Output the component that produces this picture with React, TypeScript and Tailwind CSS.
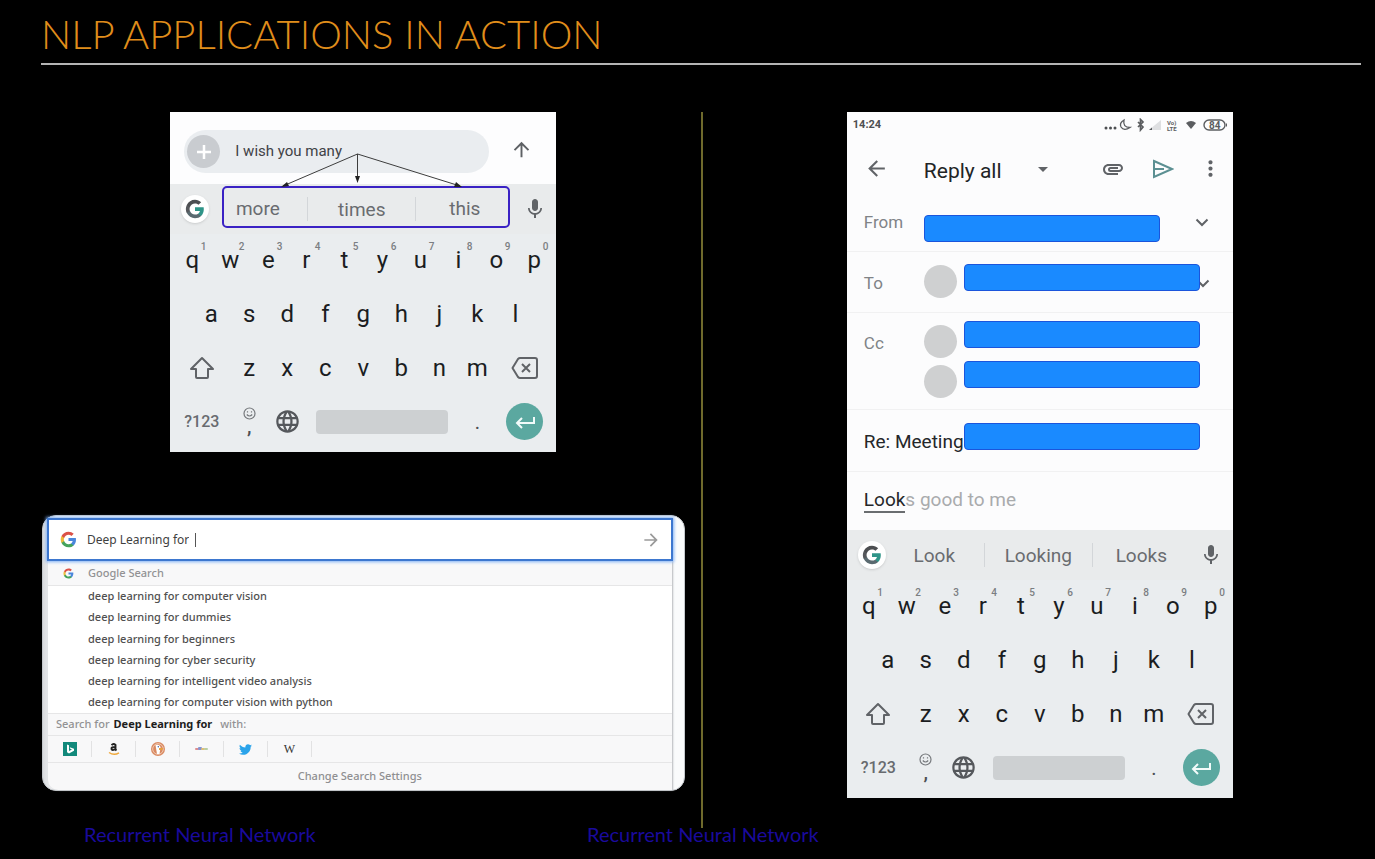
import React from "react";
import {
  MdArrowBack,
  MdArrowDropDown,
  MdArrowForward,
  MdArrowUpward,
  MdAttachment,
  MdLanguage,
  MdMic,
  MdMoreVert,
} from "react-icons/md";
import { FaTwitter } from "react-icons/fa";

type GoogleColors = { blue: string; green: string; yellow: string; red: string };

const brandColors: GoogleColors = { blue: "#4a86dc", green: "#45a35c", yellow: "#ecbb3c", red: "#db5147" };
const mutedColors: GoogleColors = { blue: "#2f9488", green: "#5a6a70", yellow: "#56585c", red: "#4c4e51" };

function GoogleG({ size, colors }: { size: number; colors: GoogleColors }) {
  return (
    <svg width={size} height={size} viewBox="0 0 24 24" aria-hidden="true">
      <path fill={colors.blue} d="M22.56 12.25c0-.78-.07-1.53-.2-2.25H12v4.26h5.92c-.26 1.37-1.04 2.53-2.21 3.31v2.77h3.57c2.08-1.92 3.28-4.74 3.28-8.09z" />
      <path fill={colors.green} d="M12 23c2.97 0 5.46-.98 7.28-2.66l-3.57-2.77c-.98.66-2.23 1.06-3.71 1.06-2.86 0-5.29-1.93-6.16-4.53H2.18v2.84C3.99 20.53 7.7 23 12 23z" />
      <path fill={colors.yellow} d="M5.84 14.09c-.22-.66-.35-1.36-.35-2.09s.13-1.43.35-2.09V7.07H2.18C1.43 8.55 1 10.22 1 12s.43 3.45 1.18 4.93l3.66-2.84z" />
      <path fill={colors.red} d="M12 5.38c1.62 0 3.06.56 4.21 1.64l3.15-3.15C17.45 2.09 14.97 1 12 1 7.7 1 3.99 3.47 2.18 7.07l3.66 2.84c.87-2.6 3.3-4.53 6.16-4.53z" />
    </svg>
  );
}

function ShiftIcon() {
  return (
    <svg width="26" height="24" viewBox="0 0 26 24" fill="none" stroke="#606367" strokeWidth="2" strokeLinejoin="round">
      <path d="M13 2 L24 13 H19 V21 Q19 22 18 22 H8 Q7 22 7 21 V13 H2 Z" />
    </svg>
  );
}

function BackspaceIcon() {
  return (
    <svg width="28" height="24" viewBox="0 0 28 24" fill="none" stroke="#606367" strokeWidth="2" strokeLinejoin="round">
      <path d="M9 2 H24 Q26 2 26 4 V20 Q26 22 24 22 H9 Q8 22 7 21 L1.500 12 L7 3 Q8 2 9 2 Z" />
      <path d="M11 8 L19 16 M19 8 L11 16" />
    </svg>
  );
}

function SmileIcon() {
  return (
    <svg width="13" height="13" viewBox="0 0 13 13" fill="none" stroke="#75787c" strokeWidth="1.200">
      <circle cx="6.500" cy="6.500" r="5.500" />
      <path d="M3.800 7.500 Q6.500 10.500 9.200 7.500" />
      <path d="M4.500 4.200 V5.400 M8.500 4.200 V5.400" />
    </svg>
  );
}

function EnterIcon() {
  return (
    <svg width="22" height="16" viewBox="0 0 22 16" fill="none" stroke="#f2fbfa" strokeWidth="2">
      <path d="M20 3 V9 H3 M8 4 L3 9 L8 14" />
    </svg>
  );
}

function LetterKey({ letter, digit }: { letter: string; digit?: string }) {
  return (
    <button type="button" className="relative col-span-2 h-full text-2xl text-[#1b1d1f]">
      {letter}
      {digit !== undefined && (
        <span className="absolute top-2 right-[5px] text-[10px] leading-[10px] font-medium text-[#7b7e82]">{digit}</span>
      )}
    </button>
  );
}

function Keyboard({ words }: { words: string[] }) {
  return (
    <div className="bg-[#eaedef] pb-1">
      <div className="grid h-[50px] grid-cols-[38px_99px_1fr_97px_43px] items-center bg-[#e9ebec]">
        <button type="button" aria-label="Google" className="ml-[11px] flex size-7 items-center justify-center rounded-full bg-white shadow-sm">
          <GoogleG size={20} colors={mutedColors} />
        </button>
        <button type="button" className="pt-px text-[19px] text-[#696c70]">{words[0]}</button>
        <button type="button" className="h-6 border-x border-[#d3d6d9] pt-px text-[19px] leading-6 text-[#696c70]">{words[1]}</button>
        <button type="button" className="pt-px text-[19px] text-[#696c70]">{words[2]}</button>
        <button type="button" aria-label="Voice input" className="flex justify-center text-[#606367]">
          <MdMic size={24} />
        </button>
      </div>
      <div className="grid h-[52px] grid-cols-20 px-[3px]">
        {"qwertyuiop".split("").map((c, i) => (
          <LetterKey key={c} letter={c} digit={String((i + 1) % 10)} />
        ))}
      </div>
      <div className="grid h-[55px] grid-cols-18 px-[22px]">
        {"asdfghjkl".split("").map((c) => (
          <LetterKey key={c} letter={c} />
        ))}
      </div>
      <div className="grid h-[54px] grid-cols-20 px-[3px]">
        <button type="button" aria-label="Shift" className="col-span-3 flex items-center justify-center">
          <ShiftIcon />
        </button>
        {"zxcvbnm".split("").map((c) => (
          <LetterKey key={c} letter={c} />
        ))}
        <button type="button" aria-label="Backspace" className="col-span-3 flex items-center justify-center">
          <BackspaceIcon />
        </button>
      </div>
      <div className="grid h-[53px] grid-cols-20 px-[3px]">
        <button type="button" className="col-span-3 text-base font-medium text-[#686b6f]">?123</button>
        <button type="button" className="col-span-2 flex flex-col items-center pt-3 text-xl leading-3 font-medium text-[#4c4f53]">
          <SmileIcon />
          ,
        </button>
        <button type="button" aria-label="Language" className="col-span-2 flex items-center justify-center text-[#55585c]">
          <MdLanguage size={27} />
        </button>
        <button type="button" aria-label="Space" className="col-span-8 mx-[10px] h-6 self-center rounded-sm bg-[#cdd0d2]" />
        <button type="button" className="col-span-2 text-xl text-[#4c4f53]">.</button>
        <button type="button" aria-label="Enter" className="col-span-3 flex size-[37px] items-center justify-center self-center justify-self-center rounded-full bg-[#5ba8a0]">
          <EnterIcon />
        </button>
      </div>
    </div>
  );
}

function MessagePhone() {
  return (
    <section className="relative mx-auto w-[386px] max-w-full bg-[#fdfdfe] font-[Roboto,sans-serif]">
      <div className="flex h-[72px] items-center justify-between pt-[7px] pr-[23px] pl-[14px]">
        <label className="flex h-[43px] w-[305px] items-center gap-[15px] rounded-full bg-[#eaedf0] pl-[3px]">
          <span className="flex size-[33px] items-center justify-center rounded-full bg-[#c9ccd0]">
            <svg width="14" height="14" viewBox="0 0 14 14" stroke="#fff" strokeWidth="2.500">
              <path d="M7 0 V14 M0 7 H14" />
            </svg>
          </span>
          <input aria-label="Message" defaultValue="I wish you many" className="w-60 bg-transparent text-[15px] text-[#3f4246] outline-none" />
        </label>
        <button type="button" aria-label="Send" className="pb-1 text-[#5e6165]">
          <MdArrowUpward size={23} />
        </button>
      </div>
      <Keyboard words={["more", "times", "this"]} />
      <svg className="pointer-events-none absolute inset-0" width="386" height="130" viewBox="0 0 386 130" fill="none">
        <rect x="53" y="75" width="286" height="40" rx="4" stroke="#3a22c4" strokeWidth="2" />
        <g stroke="#3d3d3d" strokeWidth="1">
          <path d="M187.500 42 L113 74 M187.500 42 V68 M187.500 42 L290 74" />
        </g>
        <g fill="#222">
          <path d="M111 75 L117 70 L119 74 Z" />
          <path d="M187.500 71 L185 64 H190 Z" />
          <path d="M292 75 L284 75 L286 70 Z" />
        </g>
      </svg>
    </section>
  );
}

const suggestions = [
  "deep learning for computer vision",
  "deep learning for dummies",
  "deep learning for beginners",
  "deep learning for cyber security",
  "deep learning for intelligent video analysis",
  "deep learning for computer vision with python",
];

const engines: { name: string; icon: React.ReactNode }[] = [
  {
    name: "Bing",
    icon: (
      <svg width="14" height="14" viewBox="0 0 14 14">
        <rect width="14" height="14" fill="#12897b" />
        <path d="M4 2.500 L6 3.200 V9 L9 7.600 L7.300 6.800 L6.700 5.200 L11 6.700 V8.700 L6 11.500 L4 10.300 Z" fill="#fff" />
      </svg>
    ),
  },
  {
    name: "Amazon",
    icon: (
      <svg width="14" height="14" viewBox="0 0 14 14" fill="none">
        <path d="M4.500 3.200 Q6.500 1 8.500 3 V7.500 L9.500 8.500 M8.500 5 Q4 4.800 4.500 7 Q5.500 9 8.500 7" stroke="#222" strokeWidth="1.900" />
        <path d="M2 10.500 Q7 14 12 10.800" stroke="#f0a93c" strokeWidth="1.400" />
      </svg>
    ),
  },
  {
    name: "DuckDuckGo",
    icon: (
      <svg width="14" height="14" viewBox="0 0 14 14">
        <circle cx="7" cy="7" r="7" fill="#d98a62" />
        <circle cx="7" cy="7" r="5.300" fill="none" stroke="#f6d9c8" strokeWidth="0.800" />
        <path d="M4.500 3 Q9 2 9.500 5.500 L8.500 12 H6 Z" fill="#fff" />
        <path d="M8 6 H12.500 L11 8 H8 Z" fill="#e8a03f" />
        <circle cx="7.300" cy="4.800" r="0.700" fill="#35589b" />
      </svg>
    ),
  },
  {
    name: "eBay",
    icon: (
      <svg width="13" height="6" viewBox="0 0 13 6">
        <rect x="0" y="2" width="4" height="2" rx="1" fill="#dd8e90" />
        <rect x="3" y="1" width="4" height="3" rx="1" fill="#8795cf" />
        <rect x="6" y="2" width="4" height="2" rx="1" fill="#e0bf79" />
        <rect x="9" y="2" width="4" height="2" rx="1" fill="#b9cfa4" />
      </svg>
    ),
  },
  { name: "Twitter", icon: <FaTwitter size={13} color="#2aa3ea" /> },
  { name: "Wikipedia", icon: <span className="font-['Liberation_Serif',serif] text-xs text-[#333]">W</span> },
];

function SearchCard() {
  return (
    <section className="rounded-[14px] border border-[#c4c8cc] bg-[#fafbfc] bg-linear-to-r from-[#d9dbde] to-[#fafbfc] to-2% pt-[2px] pr-[11px] pl-1 font-['Noto_Sans',sans-serif] text-[11px] font-medium text-[#505050]">
      <form className="relative flex h-[43px] items-center border-2 border-[#3d77cf] bg-white pr-[10px] pl-[11px] shadow-[0_0_3px_1px_#7fb0f5]" onSubmit={(e) => e.preventDefault()}>
        <GoogleG size={17} colors={brandColors} />
        <input aria-label="Search" defaultValue="Deep Learning for" className="field-sizing-content ml-[10px] bg-transparent text-xs font-normal text-[#3f3f3f] outline-none" />
        <span className="ml-[6px] h-[14px] w-px bg-[#555]" />
        <button type="submit" aria-label="Go" className="ml-auto text-[#9a9a9a]">
          <MdArrowForward size={20} />
        </button>
      </form>
      <div className="mx-px overflow-hidden rounded-bl-[10px] bg-[#f8f8f9] pt-px shadow-[1px_0_2px_#b5b8bb]">
        <div className="flex h-6 items-center gap-[14px] border-b border-[#e6e6e7] pl-[15px] text-[#929294]">
          <GoogleG size={11} colors={brandColors} />
          Google Search
        </div>
        <ul className="grid h-[127px] grid-rows-6 items-center bg-white pl-10">
          {suggestions.map((s) => (
            <li key={s}>{s}</li>
          ))}
        </ul>
        <p className="flex h-[23px] items-center border-y border-[#e6e6e7] pl-2 text-[#929294]">
          <span>Search for</span>
          <strong className="mr-2 ml-1 text-[#1d1d1d]">Deep Learning for</strong>
          <span>with:</span>
        </p>
        <div className="flex h-[27px] items-center border-b border-[#e6e6e7]">
          {engines.map((e) => (
            <button key={e.name} type="button" aria-label={e.name} className="flex h-4 w-11 items-center justify-center border-r border-[#e2e2e3]">
              {e.icon}
            </button>
          ))}
        </div>
        <button type="button" className="h-[27px] w-full text-center text-[#8f8f91]">Change Search Settings</button>
      </div>
    </section>
  );
}

function Redacted() {
  return <span className="h-[27px] w-[236px] shrink-0 rounded-sm border border-[#1b55dc] bg-[#1a8aff]" />;
}

function Avatar() {
  return <span className="mr-[7px] size-[33px] shrink-0 rounded-full bg-[#cfd0d1]" />;
}

function Chevron() {
  return (
    <svg width="14" height="20" viewBox="0 0 14 20" fill="none" stroke="#5f6266" strokeWidth="2">
      <path d="M1.500 7.500 L7 13 L12.500 7.500" />
    </svg>
  );
}

function StatusIcons() {
  return (
    <svg width="124" height="14" viewBox="0 0 124 14" fill="none">
      <g fill="#4d4f52">
        <circle cx="3" cy="10" r="1.500" />
        <circle cx="7.500" cy="10" r="1.500" />
        <circle cx="12" cy="10" r="1.500" />
      </g>
      <path d="M21 2 Q16 5 18 9 Q21 13.500 27 9.500 Q19.500 9.500 21 2 Z" stroke="#5b5d60" strokeWidth="1.300" />
      <path d="M35 4 L40 9 L37.500 12 V1.500 L40 4 L35 9" stroke="#5b5d60" strokeWidth="1.700" />
      <path d="M46 12 L58 2 V12 Z" fill="#dedfe1" />
      <path d="M46 12 L49 9.500 V12 Z" fill="#5b5d60" />
      <path d="M83 5 Q88 1 93 5 L88 11 Z" fill="#5b5d60" />
      <rect x="101" y="2" width="21" height="10" rx="5" stroke="#5b5d60" strokeWidth="1.400" />
      <rect x="123" y="5.500" width="1" height="3" fill="#5b5d60" />
      <g fill="#5b5d60" fontFamily="Roboto, sans-serif" fontWeight="700">
        <text x="64" y="6.500" fontSize="6">Vo)</text>
        <text x="64" y="12.500" fontSize="6">LTE</text>
        <text x="106" y="10.500" fontSize="10">84</text>
      </g>
    </svg>
  );
}

function MailPhone() {
  return (
    <section className="mx-auto w-[386px] max-w-full bg-[#fcfcfd] font-[Roboto,sans-serif] text-[17px] leading-5 text-[#808387]">
      <div className="flex h-[26px] items-center justify-between pr-[6px] pl-[6px] text-[11px] font-bold text-[#4d4f52]">
        <span>14:24</span>
        <StatusIcons />
      </div>
      <header className="grid h-[61px] grid-cols-[60px_103px_1fr_50px_50px_45px] items-center pl-[17px] text-[#606367]">
        <button type="button" aria-label="Back">
          <MdArrowBack size={25} />
        </button>
        <h2 className="pt-1 text-[21px] text-[#222426]">Reply all</h2>
        <button type="button" aria-label="Reply options" className="pl-1">
          <MdArrowDropDown size={24} />
        </button>
        <button type="button" aria-label="Attach" className="flex justify-center">
          <MdAttachment size={24} />
        </button>
        <button type="button" aria-label="Send" className="flex justify-center">
          <svg width="22" height="20" viewBox="0 0 22 20" fill="none" stroke="#5b8f92" strokeWidth="2">
            <path d="M2 2 L20 10 L2 18 V2 Z M2 10 H12" />
          </svg>
        </button>
        <button type="button" aria-label="More" className="flex justify-center">
          <MdMoreVert size={25} />
        </button>
      </header>
      <div className="flex h-[53px] items-start border-b border-[#f1f1f2] pl-[17px]">
        <span className="w-[60px] pt-[13px]">From</span>
        <span className="flex pt-4">
          <Redacted />
        </span>
        <button type="button" aria-label="Change sender" className="ml-[35px] pt-[13px]">
          <Chevron />
        </button>
      </div>
      <div className="flex h-[61px] items-start border-b border-[#f1f1f2] pl-[17px]">
        <span className="w-[60px] pt-[21px]">To</span>
        <span className="flex pt-[13px]">
          <Avatar />
        </span>
        <span className="relative z-10 flex pt-3">
          <Redacted />
        </span>
        <button type="button" aria-label="Show recipients" className="-ml-1 pt-[21px]">
          <Chevron />
        </button>
      </div>
      <div className="flex h-[97px] items-start border-b border-[#f1f1f2] pl-[17px]">
        <span className="w-[60px] pt-5">Cc</span>
        <span className="flex flex-col gap-[7px] pt-3">
          <Avatar />
          <Avatar />
        </span>
        <span className="flex flex-col gap-[13px] pt-2">
          <Redacted />
          <Redacted />
        </span>
      </div>
      <div className="flex h-[62px] items-start border-b border-[#f1f1f2] pl-[17px] text-[19px] text-[#25272a]">
        <span className="w-[100px] pt-[22px] whitespace-nowrap">Re: Meeting</span>
        <span className="flex pt-[13px]">
          <Redacted />
        </span>
      </div>
      <div role="textbox" aria-label="Compose email" className="h-[58px] pt-[17px] pl-[17px] text-[19px] leading-[22px] text-[#a9abad]">
        <span className="inline-block border-b-2 border-[#6a6d70] text-[#25272a]">Look</span>s good to me
      </div>
      <Keyboard words={["Look", "Looking", "Looks"]} />
    </section>
  );
}

export default function App() {
  return (
    <div className="min-h-screen bg-black">
      <header className="mr-[14px] ml-[41px] flex h-[65px] items-center border-b-2 border-[#b4b4b4] pt-1">
        <h1 className="font-[Lato,sans-serif] text-[40px] leading-[48px] font-light text-[#e08e1b]">NLP APPLICATIONS IN ACTION</h1>
      </header>
      <main className="grid grid-cols-[51.1%_1fr] pt-[47px]">
        <div className="flex min-h-[716px] flex-col gap-[63px] border-r-2 border-[#6f6a2c] pr-4 pl-[42px]">
          <MessagePhone />
          <SearchCard />
        </div>
        <div className="pl-[2px]">
          <MailPhone />
        </div>
      </main>
      <footer className="grid grid-cols-[503px_1fr] pl-[84px] font-[Lato,sans-serif] text-[20px] leading-3 text-[#1a0a9c]">
        <span>Recurrent Neural Network</span>
        <span>Recurrent Neural Network</span>
      </footer>
    </div>
  );
}
